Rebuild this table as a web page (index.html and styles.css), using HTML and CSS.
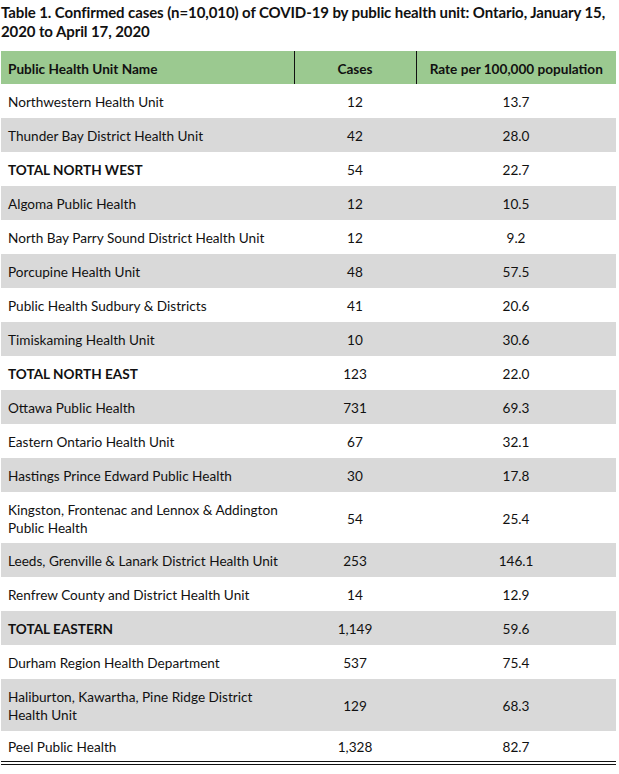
FILE: index.html
```html
<!DOCTYPE html>
<html lang="en">
<head>
<meta charset="utf-8">
<title>Table 1</title>
<link rel="stylesheet" href="styles.css">
</head>
<body>
<div class="page">
  <h1 class="title">Table 1. Confirmed cases (n=10,010) of COVID-19 by public health unit: Ontario, January 15, 2020 to April 17, 2020</h1>
  <table class="data">
    <thead>
      <tr>
        <th class="name">Public Health Unit Name</th>
        <th class="num c2 sep">Cases</th>
        <th class="num c3 sep">Rate per 100,000 population</th>
      </tr>
    </thead>
    <tbody>
      <tr><td class="name">Northwestern Health Unit</td><td class="num">12</td><td class="num">13.7</td></tr>
      <tr class="alt"><td class="name">Thunder Bay District Health Unit</td><td class="num">42</td><td class="num">28.0</td></tr>
      <tr class="total"><td class="name">TOTAL NORTH WEST</td><td class="num">54</td><td class="num">22.7</td></tr>
      <tr class="alt"><td class="name">Algoma Public Health</td><td class="num">12</td><td class="num">10.5</td></tr>
      <tr><td class="name">North Bay Parry Sound District Health Unit</td><td class="num">12</td><td class="num">9.2</td></tr>
      <tr class="alt"><td class="name">Porcupine Health Unit</td><td class="num">48</td><td class="num">57.5</td></tr>
      <tr><td class="name">Public Health Sudbury &amp; Districts</td><td class="num">41</td><td class="num">20.6</td></tr>
      <tr class="alt"><td class="name">Timiskaming Health Unit</td><td class="num">10</td><td class="num">30.6</td></tr>
      <tr class="total"><td class="name">TOTAL NORTH EAST</td><td class="num">123</td><td class="num">22.0</td></tr>
      <tr class="alt"><td class="name">Ottawa Public Health</td><td class="num">731</td><td class="num">69.3</td></tr>
      <tr><td class="name">Eastern Ontario Health Unit</td><td class="num">67</td><td class="num">32.1</td></tr>
      <tr class="alt"><td class="name">Hastings Prince Edward Public Health</td><td class="num">30</td><td class="num">17.8</td></tr>
      <tr class="tall short"><td class="name">Kingston, Frontenac and Lennox &amp; Addington<br>Public Health</td><td class="num">54</td><td class="num">25.4</td></tr>
      <tr class="alt"><td class="name">Leeds, Grenville &amp; Lanark District Health Unit</td><td class="num">253</td><td class="num">146.1</td></tr>
      <tr><td class="name">Renfrew County and District Health Unit</td><td class="num">14</td><td class="num">12.9</td></tr>
      <tr class="alt total"><td class="name">TOTAL EASTERN</td><td class="num">1,149</td><td class="num">59.6</td></tr>
      <tr><td class="name">Durham Region Health Department</td><td class="num">537</td><td class="num">75.4</td></tr>
      <tr class="alt tall"><td class="name">Haliburton, Kawartha, Pine Ridge District<br>Health Unit</td><td class="num">129</td><td class="num">68.3</td></tr>
      <tr class="last"><td class="name">Peel Public Health</td><td class="num">1,328</td><td class="num">82.7</td></tr>
    </tbody>
  </table>
</div>
</body>
</html>
```

FILE: styles.css
```css
html, body {
  margin: 0;
  padding: 0;
  background: #ffffff;
}

body {
  font-family: Lato, "Open Sans", "Liberation Sans", sans-serif;
  color: #111111;
}

.page {
  width: 619px;
  padding: 3px 0 0 1px;
  box-sizing: border-box;
}

.title {
  margin: 0;
  width: 614px;
  font-size: 15px;
  line-height: 19px;
  font-weight: 700;
  letter-spacing: -0.1px;
  color: #111111;
}

.data {
  margin-top: 10px;
  width: 615px;
  border-collapse: collapse;
  table-layout: fixed;
  font-size: 13.6px;
}

.data th,
.data td {
  padding: 2px 0 0 7px;
  height: 34px;
  vertical-align: middle;
  box-sizing: border-box;
}

.data th.name { width: 293px; }
.data th.c2 { width: 122px; }
.data th.c3 { width: 200px; }

.data thead tr {
  background: #9bc990;
}

.data th {
  height: 33px;
  font-weight: 700;
  text-align: left;
}

.data th.sep {
  border-left: 1.5px solid #111111;
}

.data .num {
  text-align: center;
  padding: 2px 0 0 0;
}

.data tr.alt {
  background: #d9d9d9;
}

.data tr.total td.name {
  font-weight: 700;
}

.data tr.tall td {
  height: 52px;
  line-height: 18px;
}

.data tr.short td {
  height: 51px;
}

.data tr.last td {
  height: 32px;
  border-bottom: 4px double #111111;
}
```
